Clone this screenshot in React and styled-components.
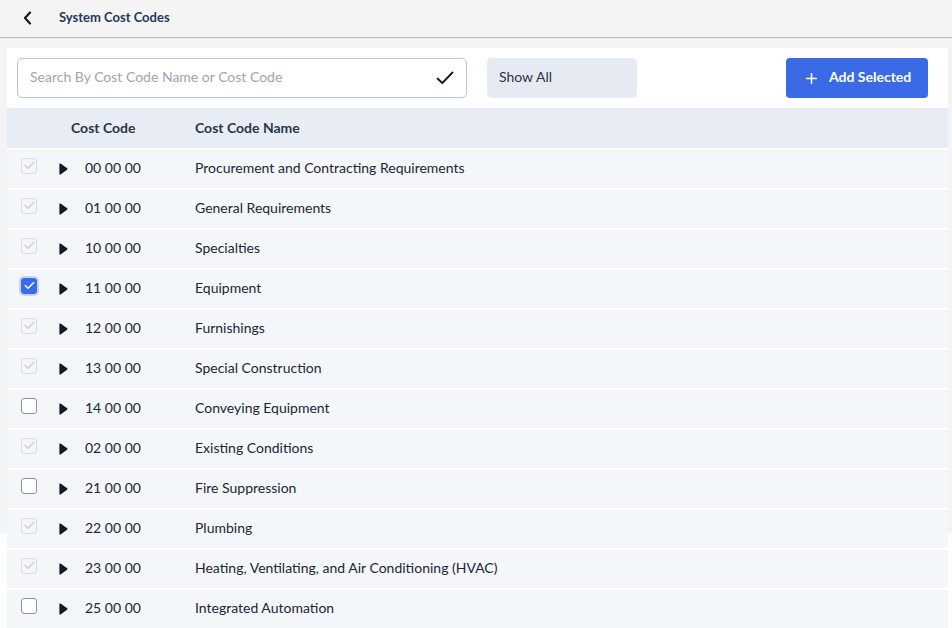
import React from 'react';
import styled, { createGlobalStyle } from 'styled-components';

const Global = createGlobalStyle`
  body {
    margin: 0;
    background: #fff;
    font-family: Lato, "Open Sans", sans-serif;
    color: #1c2536;
  }
`

// gray backdrop stops at 533px, the list runs past it onto white
const Page = styled.div`
  background: linear-gradient(#f4f4f4 0, #f4f4f4 533px, #fff 533px);
  min-height: 628px;
  width: 952px;
`

const Header = styled.div`
  box-sizing: border-box;
  border-bottom: 1px solid #a9bfd4;
  display: flex;
  align-items: center;
  padding: 0 0 4px 20px;
  height: 38px;
`

const BackButton = styled.button`
  border: none;
  background: none;
  padding: 0;
  width: 14px;
  height: 16px;
  display: flex;
  align-items: center;
  justify-content: center;
  cursor: pointer;
  margin: 3px 25px 0 0;
`

const Title = styled.h1`
  margin: 0;
  font-size: 13px;
  font-weight: 700;
  color: #29365a;
`

const Body = styled.div`
  padding: 10px 4px 0 7px;
`

const Panel = styled.div`
  background: #fff;
`

const Toolbar = styled.div`
  display: flex;
  align-items: center;
  padding: 10px 20px 10px 10px;
  gap: 20px;
`

const SearchBox = styled.div`
  width: 450px;
  height: 40px;
  box-sizing: border-box;
  border: 1px solid #b9c6d3;
  border-radius: 5px;
  display: flex;
  align-items: center;
  padding: 0 12px 0 12px;
`

const SearchInput = styled.input`
  flex: 1;
  border: none;
  outline: none;
  font-family: inherit;
  font-size: 14px;
  color: #1c2536;
  background: transparent;
  padding: 0 0 4px 0;
  &::placeholder { color: #9ca5b2; }
`

const ShowAll = styled.button`
  width: 150px;
  height: 40px;
  border: none;
  border-radius: 5px;
  background: #e6ebf3;
  font-family: inherit;
  font-size: 14px;
  color: #2b3447;
  text-align: left;
  padding: 0 12px 4px;
`

const AddButton = styled.button`
  margin-left: auto;
  width: 142px;
  height: 40px;
  border: none;
  border-radius: 4px;
  background: #3a6ae6;
  color: #fff;
  font-family: inherit;
  font-size: 14px;
  font-weight: 700;
  display: flex;
  align-items: center;
  gap: 12px;
  padding: 0 0 3px 20px;
  svg { margin-top: 3px; }
`

const Grid = styled.div`
  display: grid;
  grid-template-columns: 45px 143px 1fr;
  align-items: center;
  box-sizing: border-box;
  height: ${p => (p.head ? 40 : 38)}px;
  margin-top: ${p => (p.head ? 0 : 2)}px;
  padding-bottom: ${p => (p.head ? 2 : 4)}px;
  background: ${p => (p.head ? '#e8edf5' : '#f3f7fa')};
  font-size: 14px;
`

const HeadCell = styled.div`
  font-weight: 700;
  color: #2a3449;
  padding-left: ${p => p.pad || 0}px;
`

const CheckCell = styled.div`
  padding-left: 14px;
  display: flex;
  align-items: center;
`

const Box = styled.span`
  width: 16px;
  height: 16px;
  box-sizing: border-box;
  border-radius: 3px;
  display: flex;
  align-items: center;
  justify-content: center;
  margin-bottom: 3px;
  border: 1px solid ${p => (p.state === 'on' ? '#3a6ae6' : p.state === 'lock' ? '#d9dee4' : '#8993a3')};
  background: ${p => (p.state === 'on' ? '#3a6ae6' : p.state === 'lock' ? '#f4f6f8' : '#fff')};
  box-shadow: ${p => (p.state === 'on' ? '0 0 0 2px #c4d4fb' : 'none')};
`

const CodeCell = styled.div`
  display: flex;
  align-items: center;
  padding-left: 7px;
  gap: 17px;
`

const Caret = styled.span`
  display: flex;
  width: 9px;
  margin-top: 4px;
`

const rows = [
  ['00 00 00', 'Procurement and Contracting Requirements', 'lock'],
  ['01 00 00', 'General Requirements', 'lock'],
  ['10 00 00', 'Specialties', 'lock'],
  ['11 00 00', 'Equipment', 'on'],
  ['12 00 00', 'Furnishings', 'lock'],
  ['13 00 00', 'Special Construction', 'lock'],
  ['14 00 00', 'Conveying Equipment', 'off'],
  ['02 00 00', 'Existing Conditions', 'lock'],
  ['21 00 00', 'Fire Suppression', 'off'],
  ['22 00 00', 'Plumbing', 'lock'],
  ['23 00 00', 'Heating, Ventilating, and Air Conditioning (HVAC)', 'lock'],
  ['25 00 00', 'Integrated Automation', 'off'],
];

function CheckMark({ color }) {
  return (
    <svg width="11" height="9" viewBox="0 0 11 9">
      <path d="M1.2 4.6 L4 7.3 L9.8 1.4" fill="none" stroke={color} strokeWidth="1.4" strokeLinecap="round" strokeLinejoin="round" />
    </svg>
  );
}

function Row({ code, name, state }) {
  return (
    <Grid>
      <CheckCell>
        <Box state={state}>
          {state !== 'off' && <CheckMark color={state === 'on' ? '#fff' : '#c9cfd6'} />}
        </Box>
      </CheckCell>
      <CodeCell>
        <Caret>
          <svg width="9" height="12" viewBox="0 0 9 12">
            <path d="M1.6 0.5 Q0.4 0.1 0.4 1.6 L0.4 10.4 Q0.4 11.9 1.6 11.5 L8.1 6.8 Q8.9 6 8.1 5.2 Z" fill="#111827" />
          </svg>
        </Caret>
        <span>{code}</span>
      </CodeCell>
      <div>{name}</div>
    </Grid>
  );
}

export default function App() {
  return (
    <>
      <Global />
      <Page>
        <Header>
          <BackButton aria-label="Back">
            <svg width="9" height="14" viewBox="0 0 9 14">
              <path d="M7 1.5 L2 7 L7 12.5" fill="none" stroke="#111827" strokeWidth="2.2" strokeLinecap="round" strokeLinejoin="round" />
            </svg>
          </BackButton>
          <Title>System Cost Codes</Title>
        </Header>
        <Body>
          <Panel>
            <Toolbar>
              <SearchBox>
                <SearchInput placeholder="Search By Cost Code Name or Cost Code" />
                <svg width="18" height="14" viewBox="0 0 18 14">
                  <path d="M1.5 7.5 L6.3 12 L16.5 1.5" fill="none" stroke="#111827" strokeWidth="1.8" strokeLinecap="round" strokeLinejoin="round" />
                </svg>
              </SearchBox>
              <ShowAll>Show All</ShowAll>
              <AddButton>
                <svg width="11" height="11" viewBox="0 0 11 11">
                  <path d="M5.5 0.5 V10.5 M0.5 5.5 H10.5" stroke="#fff" strokeWidth="1.5" strokeLinecap="round" />
                </svg>
                Add Selected
              </AddButton>
            </Toolbar>
            <Grid head>
              <div />
              <HeadCell pad={19}>Cost Code</HeadCell>
              <HeadCell>Cost Code Name</HeadCell>
            </Grid>
            {rows.map(([code, name, state]) => (
              <Row key={code + name} code={code} name={name} state={state} />
            ))}
          </Panel>
        </Body>
      </Page>
    </>
  );
}
